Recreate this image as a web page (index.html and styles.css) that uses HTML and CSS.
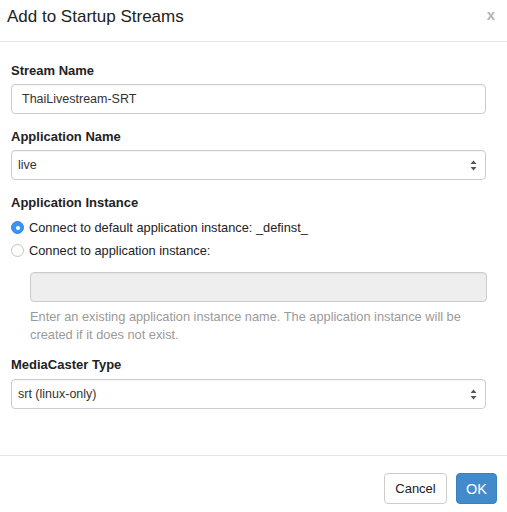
FILE: index.html
```html
<!DOCTYPE html>
<html>
<head>
<meta charset="utf-8">
<link rel="stylesheet" href="styles.css">
</head>
<body>
<div class="modal">
  <div class="modal-header">
    <h4 class="modal-title">Add to Startup Streams</h4>
    <span class="close">x</span>
  </div>
  <div class="modal-body">
    <div class="group">
      <div class="label">Stream Name</div>
      <div class="control"><span class="value">ThaiLivestream-SRT</span></div>
    </div>
    <div class="group">
      <div class="label">Application Name</div>
      <div class="control select"><span class="value">live</span>
        <svg class="arrows" width="7" height="11" viewBox="0 0 7 11"><path d="M3.5 0.5 L6.5 4 L0.5 4 Z M3.5 10.5 L6.5 7 L0.5 7 Z" fill="#555"/></svg>
      </div>
    </div>
    <div class="group">
      <div class="label">Application Instance</div>
      <div class="radio first"><span class="dot checked"></span><span>Connect to default application instance: _definst_</span></div>
      <div class="radio"><span class="dot"></span><span>Connect to application instance:</span></div>
      <div class="indent">
        <div class="control disabled"></div>
        <p class="help">Enter an existing application instance name. The application instance will be created if it does not exist.</p>
      </div>
    </div>
    <div class="group last">
      <div class="label">MediaCaster Type</div>
      <div class="control select"><span class="value">srt (linux-only)</span>
        <svg class="arrows" width="7" height="11" viewBox="0 0 7 11"><path d="M3.5 0.5 L6.5 4 L0.5 4 Z M3.5 10.5 L6.5 7 L0.5 7 Z" fill="#555"/></svg>
      </div>
    </div>
  </div>
  <div class="modal-footer">
    <button class="btn">Cancel</button>
    <button class="btn primary">OK</button>
  </div>
</div>
</body>
</html>
```
FILE: styles.css
```css
* { box-sizing: border-box; }
html, body { margin: 0; padding: 0; background: #fff; }
body {
  font-family: "Liberation Sans", Arial, sans-serif;
  font-size: 12.8px;
  color: #333;
  width: 507px;
}
.modal { width: 507px; }
.modal-header {
  height: 42px;
  border-bottom: 1px solid #e5e5e5;
  padding: 7px 12px 0 7px;
  display: flex;
  justify-content: space-between;
  align-items: flex-start;
}
.modal-title {
  margin: 0;
  font-size: 17px;
  font-weight: normal;
  line-height: 20px;
  color: #222;
}
.close {
  font-size: 15px;
  font-weight: bold;
  color: #b4b4b4;
  line-height: 16px;
}
.modal-body {
  padding: 20px 21px 46px 11px;
}
.group { margin-bottom: 14px; }
.group.last { margin-bottom: 0; }
.label {
  font-weight: bold;
  font-size: 13px;
  line-height: 18px;
  margin-bottom: 4px;
  color: #222;
}
.group.last .label { margin-bottom: 5px; }
.control {
  height: 30px;
  border: 1px solid #ccc;
  border-radius: 4px;
  background: #fff;
  display: flex;
  align-items: center;
  padding: 0 10px;
  font-size: 12.5px;
  color: #333;
  box-shadow: inset 0 1px 1px rgba(0,0,0,0.04);
}
.control.select {
  padding: 0 8px 0 6px;
  justify-content: space-between;
}
.control.disabled {
  background: #eee;
  margin-right: -1px;
}
.arrows { display: block; }
.radio {
  display: flex;
  align-items: center;
  height: 23px;
  color: #222;
}
.radio.first { margin-top: 0; }
.dot {
  width: 13px;
  height: 13px;
  border-radius: 50%;
  border: 1px solid #c4c4c4;
  background: #fff;
  margin-right: 5px;
  flex: none;
  position: relative;
}
.dot.checked {
  background: #3a94f6;
  border-color: #2f86e8;
}
.dot.checked::after {
  content: "";
  position: absolute;
  left: 3.5px;
  top: 3.5px;
  width: 4px;
  height: 4px;
  border-radius: 50%;
  background: #fff;
}
.indent {
  padding-left: 19px;
  padding-top: 10px;
}
.help {
  margin: 6px 0 -2px;
  line-height: 18px;
  color: #9a9a9a;
}
.modal-footer {
  border-top: 1px solid #e5e5e5;
  padding: 17px 10px 9px;
  display: flex;
  justify-content: flex-end;
  gap: 9px;
}
.btn {
  font-family: "Liberation Sans", Arial, sans-serif;
  height: 31px;
  border-radius: 4px;
  border: 1px solid #ccc;
  background: #fff;
  color: #222;
  font-size: 13px;
  padding: 0 10px;
  width: 63px;
}
.btn.primary {
  background: #428bca;
  border-color: #3a80bd;
  color: #fff;
  font-size: 14.5px;
  width: 41px;
  padding: 0;
}
```
